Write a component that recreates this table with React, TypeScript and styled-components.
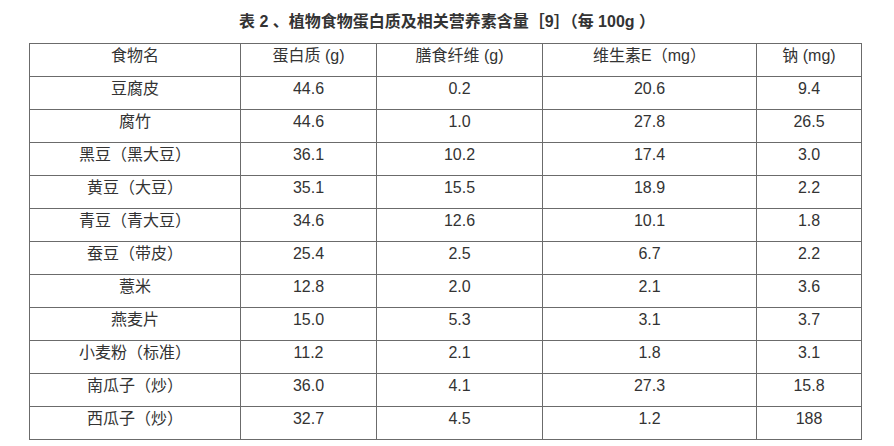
import React from 'react';
import styled, { createGlobalStyle } from 'styled-components';

const GlobalStyle = createGlobalStyle`
  body {
    margin: 0;
    background: #fff;
    font-family: 'Liberation Sans', 'Noto Sans CJK SC', sans-serif;
    color: #333;
  }
`;

const Page = styled.div`
  display: flex;
  flex-direction: column;
  align-items: center;
  width: 894px;
  padding-top: 10px;
`;

const Title = styled.h3`
  margin: 0 0 10px;
  font-size: 16px;
  line-height: 23px;
  font-weight: bold;
  color: #333;
`;

const Table = styled.table`
  border-collapse: collapse;
  table-layout: fixed;
  width: 832px;
  margin-left: -3px;
  font-size: 16px;
`;

const Cell = styled.td`
  border: 1px solid #6b6b6b;
  height: 33px;
  padding: 1px 0 0;
  box-sizing: border-box;
  vertical-align: top;
  text-align: center;
  line-height: 22px;
  color: #333;
`;

const columns = [211, 136, 166, 214, 105];

const header = ['食物名', '蛋白质 (g)', '膳食纤维 (g)', '维生素E（mg）', '钠 (mg)'];

const rows: string[][] = [
  ['豆腐皮', '44.6', '0.2', '20.6', '9.4'],
  ['腐竹', '44.6', '1.0', '27.8', '26.5'],
  ['黑豆（黑大豆）', '36.1', '10.2', '17.4', '3.0'],
  ['黄豆（大豆）', '35.1', '15.5', '18.9', '2.2'],
  ['青豆（青大豆）', '34.6', '12.6', '10.1', '1.8'],
  ['蚕豆（带皮）', '25.4', '2.5', '6.7', '2.2'],
  ['薏米', '12.8', '2.0', '2.1', '3.6'],
  ['燕麦片', '15.0', '5.3', '3.1', '3.7'],
  ['小麦粉（标准）', '11.2', '2.1', '1.8', '3.1'],
  ['南瓜子（炒）', '36.0', '4.1', '27.3', '15.8'],
  ['西瓜子（炒）', '32.7', '4.5', '1.2', '188'],
];

const App = () => (
  <Page>
    <GlobalStyle />
    <Title>表 2 、植物食物蛋白质及相关营养素含量［9］（每 100g ）</Title>
    <Table>
      <colgroup>
        {columns.map((w, i) => (
          <col key={i} style={{ width: w }} />
        ))}
      </colgroup>
      <tbody>
        <tr>
          {header.map(h => (
            <Cell key={h}>{h}</Cell>
          ))}
        </tr>
        {rows.map(r => (
          <tr key={r[0]}>
            {r.map((v, i) => (
              <Cell key={i}>{v}</Cell>
            ))}
          </tr>
        ))}
      </tbody>
    </Table>
  </Page>
);

export default App;
